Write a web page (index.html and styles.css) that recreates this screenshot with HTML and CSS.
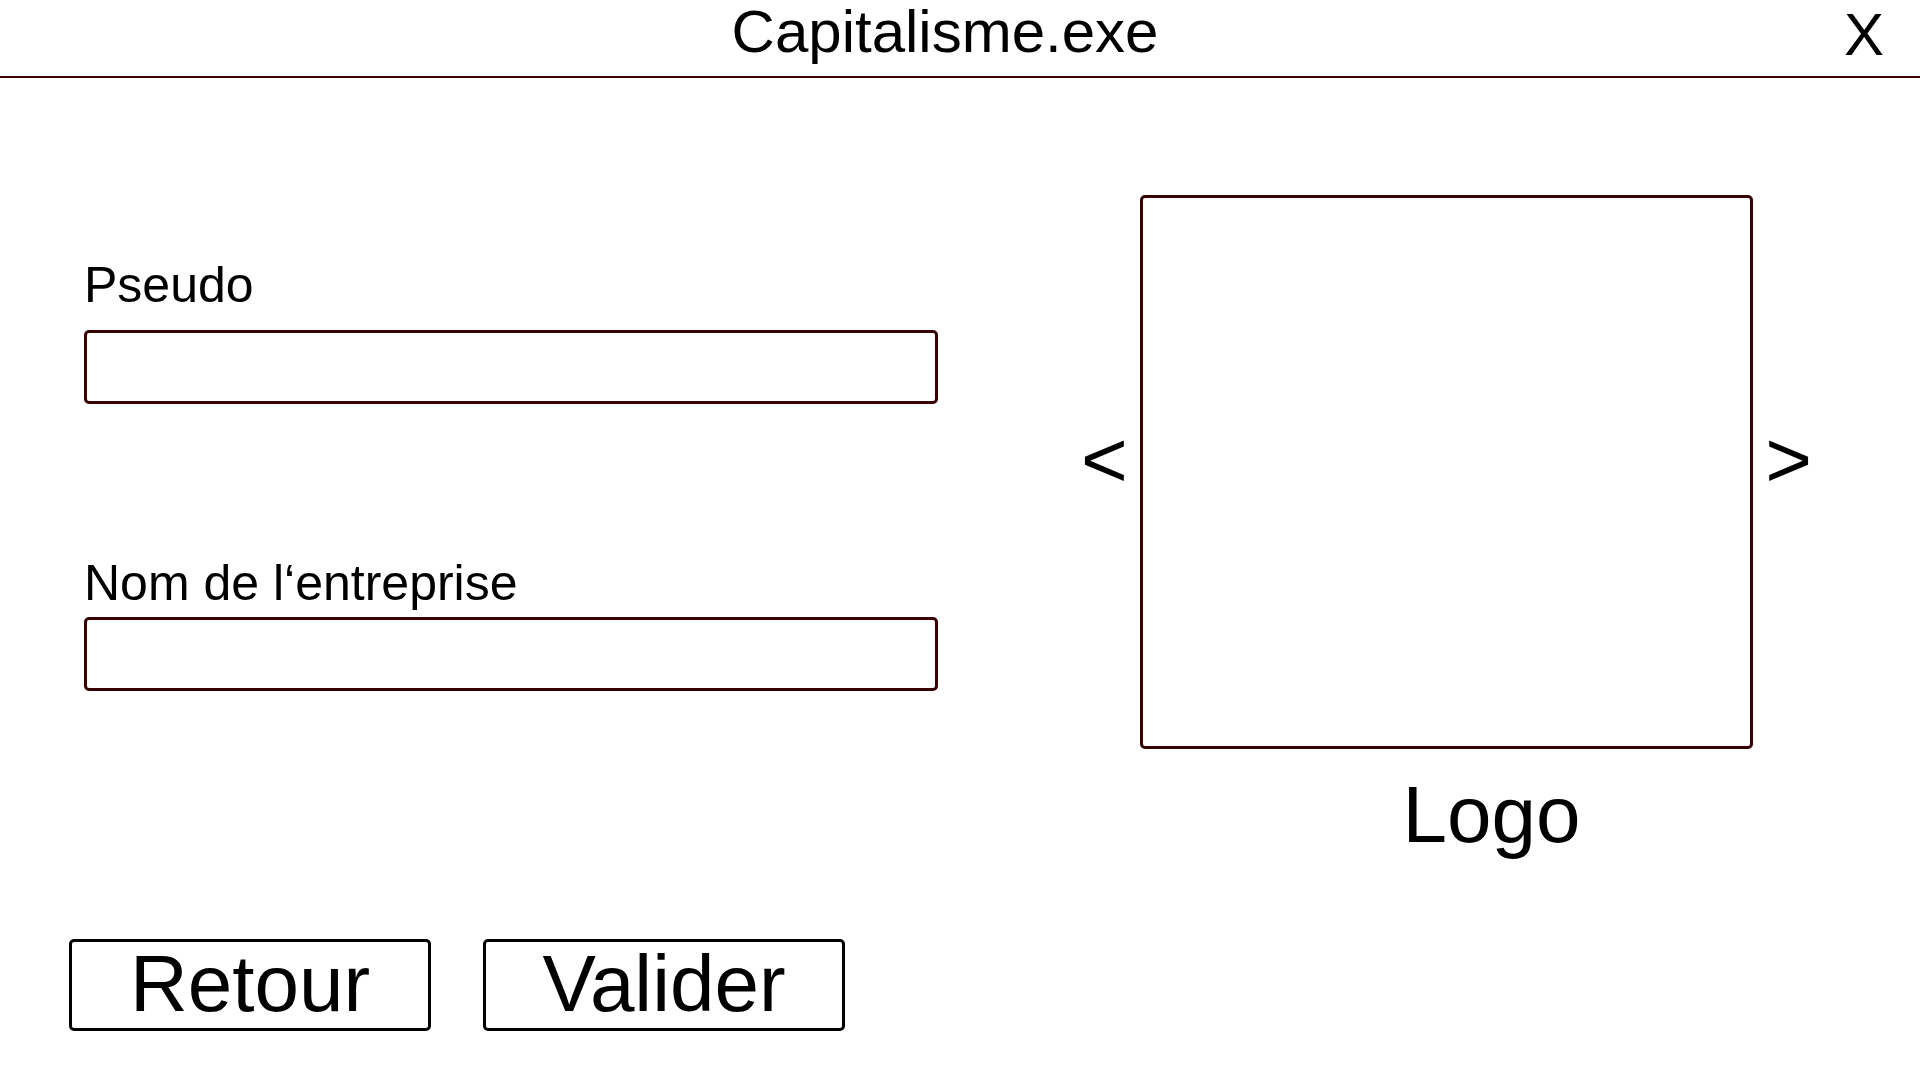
FILE: index.html
```html
<!DOCTYPE html>
<html lang="fr">
<head>
<meta charset="utf-8">
<meta name="viewport" content="width=device-width, initial-scale=1">
<title>Capitalisme.exe</title>
<link rel="stylesheet" href="styles.css">
</head>
<body>
<header class="titlebar">
  <h1 class="title">Capitalisme.exe</h1>
  <button class="close" type="button">X</button>
</header>
<main class="content">
  <form class="form">
    <div class="fields">
      <div class="field field-spaced">
        <label class="label" for="pseudo">Pseudo</label>
        <input class="input" id="pseudo" type="text">
      </div>
      <div class="field">
        <label class="label" for="entreprise">Nom de l‘entreprise</label>
        <input class="input" id="entreprise" type="text">
      </div>
    </div>
    <div class="actions">
      <button class="button" type="button">Retour</button>
      <button class="button" type="submit">Valider</button>
    </div>
  </form>
  <section class="picker">
    <div class="carousel">
      <button class="arrow" type="button">&lt;</button>
      <div class="preview"></div>
      <button class="arrow" type="button">&gt;</button>
    </div>
    <p class="caption">Logo</p>
  </section>
</main>
</body>
</html>
```
FILE: styles.css
```css
:root {
  --line: #380000;
}

* {
  box-sizing: border-box;
}

body {
  margin: 0;
  background: #fff;
  color: #000;
  font-family: "Liberation Sans", Arial, sans-serif;
}

button,
input {
  margin: 0;
  padding: 0;
  border: 0;
  background: none;
  color: inherit;
  font: inherit;
}

button {
  cursor: pointer;
}

.titlebar {
  display: grid;
  grid-template-columns: 1fr auto 1fr;
  align-items: start;
  min-height: 78px;
  padding: 0 36px 0 6px;
  border-bottom: 2px solid var(--line);
}

.title {
  grid-column: 2;
  margin: 0;
  font-size: 60px;
  font-weight: 400;
  line-height: 64px;
}

.close {
  justify-self: end;
  font-size: 60px;
  line-height: 70px;
}

.content {
  display: grid;
  grid-template-columns: 869fr 731fr;
  column-gap: 143px;
  align-items: start;
  padding: 0 108px 48px 69px;
}

.form {
  padding-top: 177px;
}

.fields {
  display: grid;
  gap: 149px;
  padding-left: 15px;
}

.field {
  display: grid;
  gap: 4px;
}

.field-spaced {
  gap: 15px;
}

.label {
  font-size: 50px;
  line-height: 60px;
}

.input {
  width: 100%;
  height: 74px;
  padding: 0 16px;
  border: 3px solid var(--line);
  border-radius: 5px;
  font-size: 50px;
}

.actions {
  display: flex;
  gap: 52px;
  margin-top: 248px;
}

.button {
  width: 362px;
  padding: 2px 0 4px;
  border: 3px solid #000;
  border-radius: 5px;
  font-size: 80px;
  line-height: 80px;
}

.picker {
  padding-top: 117px;
}

.carousel {
  display: grid;
  grid-template-columns: auto 1fr auto;
  column-gap: 12px;
  align-items: center;
}

.arrow {
  padding-bottom: 24px;
  font-size: 80px;
  line-height: 80px;
}

.preview {
  aspect-ratio: 614 / 554;
  border: 3px solid var(--line);
  border-radius: 5px;
}

.caption {
  margin: 26px 0 0;
  padding-left: 90px;
  font-size: 80px;
  line-height: 80px;
  text-align: center;
}
```
